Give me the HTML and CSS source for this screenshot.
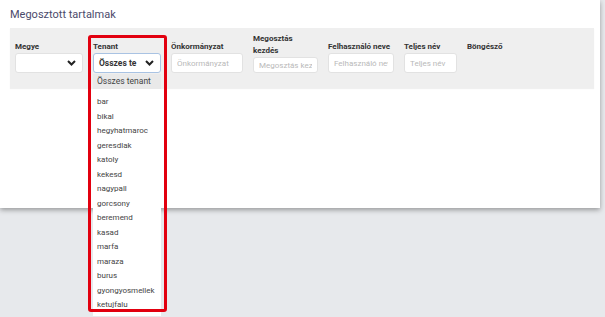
FILE: index.html
```html
<!DOCTYPE html>
<html lang="hu">

<head>
    <meta charset="UTF-8">
    <meta name="viewport" content="width=device-width, initial-scale=1.0">
    <title>Megosztott tartalmak</title>
    <link rel="stylesheet" href="styles.css">
</head>

<body>
    <div class="panel">
        <h1 class="title">Megosztott tartalmak</h1>
        <div class="filters">
            <div class="field w68">
                <label>Megye</label>
                <div class="select">
                    <span></span>
                    <svg class="chev" width="9" height="6" viewBox="0 0 9 6"><path d="M1 1l3.5 3.5L8 1" fill="none" stroke="#222" stroke-width="2"/></svg>
                </div>
            </div>
            <div class="field w68 tenant">
                <label>Tenant</label>
                <div class="select focused">
                    <span>Összes te</span>
                    <svg class="chev" width="9" height="6" viewBox="0 0 9 6"><path d="M1 1l3.5 3.5L8 1" fill="none" stroke="#222" stroke-width="2"/></svg>
                </div>
                <ul class="dropdown">
                    <li class="active">Összes tenant</li>
                    <li class="sep"></li>
                    <li>bar</li>
                    <li>bikal</li>
                    <li>hegyhatmaroc</li>
                    <li>geresdlak</li>
                    <li>katoly</li>
                    <li>kekesd</li>
                    <li>nagypall</li>
                    <li>gorcsony</li>
                    <li>beremend</li>
                    <li>kasad</li>
                    <li>marfa</li>
                    <li>maraza</li>
                    <li>burus</li>
                    <li>gyongyosmellek</li>
                    <li>ketujfalu</li>
                </ul>
                <div class="highlight"></div>
            </div>
            <div class="field w72">
                <label>Önkormányzat</label>
                <input type="text" placeholder="Önkormányzat">
            </div>
            <div class="field w65">
                <label>Megosztás<br>kezdés</label>
                <input type="text" placeholder="Megosztás kezdés">
            </div>
            <div class="field w66">
                <label>Felhasználó neve</label>
                <input type="text" placeholder="Felhasználó neve">
            </div>
            <div class="field w53">
                <label>Teljes név</label>
                <input type="text" placeholder="Teljes név">
            </div>
            <div class="field">
                <label>Böngésző</label>
                <div class="empty"></div>
            </div>
        </div>
    </div>
</body>

</html>
```
FILE: styles.css
```css
body {
    margin: 0;
    background: #e7e9ec;
    font-family: Roboto, "Liberation Sans", sans-serif;
    height: 317px;
    overflow: hidden;
}

.panel {
    background: #fff;
    height: 208px;
    width: 600px;
    box-shadow: 0 2px 5px rgba(0, 0, 0, 0.35);
    padding-top: 8px;
    box-sizing: border-box;
}

.title {
    margin: 0 0 0 10px;
    font-size: 11px;
    font-weight: normal;
    color: #4b4a6b;
    line-height: 14px;
}

.filters {
    margin: 6px 6px 0 10px;
    background: #efefef;
    height: 60px;
    padding: 5px 5px 0 5px;
    box-sizing: border-box;
    display: flex;
    align-items: flex-start;
    gap: 10px;
    box-shadow: 0 1px 1px rgba(0, 0, 0, 0.06);
}

.field {
    display: flex;
    flex-direction: column;
    justify-content: flex-end;
    height: 40px;
}

.w68 { width: 68px; }
.w72 { width: 72px; }
.w65 { width: 65px; }
.w66 { width: 66px; }
.w53 { width: 53px; }

label {
    font-size: 8px;
    font-weight: bold;
    color: #333;
    line-height: 11.5px;
    margin-bottom: 1px;
    white-space: nowrap;
}

.select,
input {
    height: 20px;
    box-sizing: border-box;
    border: 1px solid #e2e2e2;
    border-radius: 3px;
    background: #fff;
}

.select {
    display: flex;
    align-items: center;
    justify-content: space-between;
    padding: 0 6px 0 5px;
    font-size: 8.5px;
    font-weight: bold;
    color: #333;
}

.select.focused {
    border-color: #a9c3e3;
}

input {
    width: 100%;
    padding: 0 5px;
    font-family: inherit;
    font-size: 8px;
    overflow: hidden;
}

input::placeholder {
    color: #b9b9b9;
}

.empty {
    height: 20px;
}

.tenant {
    position: relative;
}

.dropdown {
    position: absolute;
    top: 41px;
    left: 0;
    width: 68px;
    margin: 0;
    padding: 0 0 3px;
    list-style: none;
    background: #fff;
    font-size: 8px;
    color: #444;
    z-index: 2;
}

.dropdown li {
    height: 14.5px;
    line-height: 14.5px;
    padding-left: 4px;
    white-space: nowrap;
}

.dropdown li.active {
    background: #e9e9e9;
    height: 15px;
    line-height: 15px;
    font-size: 8.5px;
}

.dropdown li.sep {
    height: 6px;
}

.highlight {
    position: absolute;
    left: -5px;
    top: 2px;
    width: 79px;
    height: 277px;
    box-sizing: border-box;
    border: 3px solid #e2000f;
    border-radius: 3px;
    z-index: 3;
}
```
